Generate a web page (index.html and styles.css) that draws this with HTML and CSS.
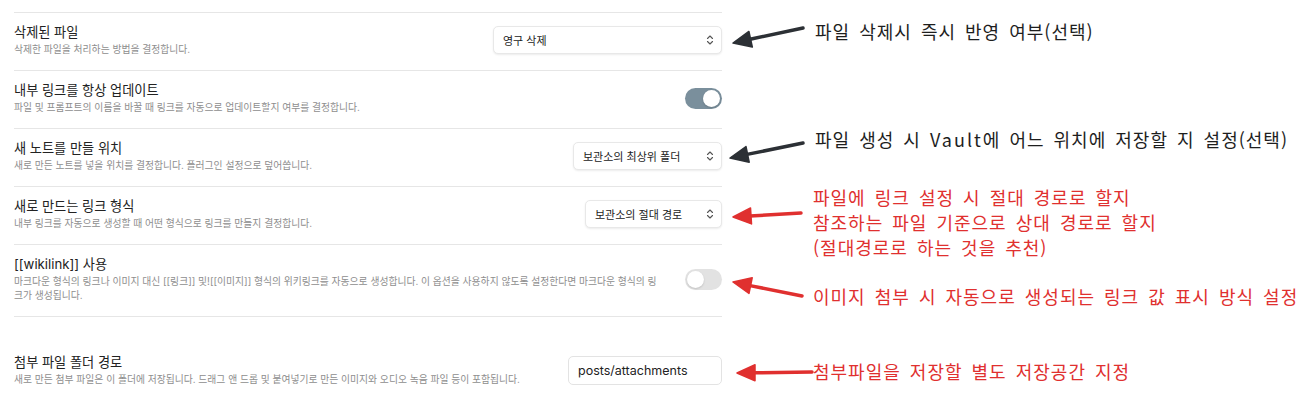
FILE: index.html
```html
<!DOCTYPE html>
<html lang="ko">
<head>
<meta charset="utf-8">
<title>Settings</title>
<link rel="stylesheet" href="styles.css">
</head>
<body>
<div class="page">
  <div class="panel">
    <div class="group">
      <div class="item">
        <div class="info">
          <div class="name">삭제된 파일</div>
          <div class="desc">삭제한 파일을 처리하는 방법을 결정합니다.</div>
        </div>
        <div class="control">
          <div class="dropdown dd-wide"><span>영구 삭제</span>
            <svg class="chev" viewBox="0 0 8 12" width="8" height="12"><path d="M1.5 4.5 L4 2 L6.5 4.5 M1.5 7.5 L4 10 L6.5 7.5"/></svg>
          </div>
        </div>
      </div>
      <div class="item">
        <div class="info">
          <div class="name">내부 링크를 항상 업데이트</div>
          <div class="desc">파일 및 프롬프트의 이름을 바꿀 때 링크를 자동으로 업데이트할지 여부를 결정합니다.</div>
        </div>
        <div class="control">
          <div class="toggle on"><span class="knob"></span></div>
        </div>
      </div>
      <div class="item">
        <div class="info">
          <div class="name">새 노트를 만들 위치</div>
          <div class="desc">새로 만든 노트를 넣을 위치를 결정합니다. 플러그인 설정으로 덮어씁니다.</div>
        </div>
        <div class="control">
          <div class="dropdown dd-mid"><span>보관소의 최상위 폴더</span>
            <svg class="chev" viewBox="0 0 8 12" width="8" height="12"><path d="M1.5 4.5 L4 2 L6.5 4.5 M1.5 7.5 L4 10 L6.5 7.5"/></svg>
          </div>
        </div>
      </div>
      <div class="item">
        <div class="info">
          <div class="name">새로 만드는 링크 형식</div>
          <div class="desc">내부 링크를 자동으로 생성할 때 어떤 형식으로 링크를 만들지 결정합니다.</div>
        </div>
        <div class="control">
          <div class="dropdown dd-narrow"><span>보관소의 절대 경로</span>
            <svg class="chev" viewBox="0 0 8 12" width="8" height="12"><path d="M1.5 4.5 L4 2 L6.5 4.5 M1.5 7.5 L4 10 L6.5 7.5"/></svg>
          </div>
        </div>
      </div>
      <div class="item">
        <div class="info">
          <div class="name">[[wikilink]] 사용</div>
          <div class="desc nowrap">마크다운 형식의 링크나 이미지 대신 [[링크]] 및![[이미지]] 형식의 위키링크를 자동으로 생성합니다. 이 옵션을 사용하지 않도록 설정한다면 마크다운 형식의 링<br>크가 생성됩니다.</div>
        </div>
        <div class="control">
          <div class="toggle"><span class="knob"></span></div>
        </div>
      </div>
    </div>
    <div class="group second">
      <div class="item first">
        <div class="info">
          <div class="name">첨부 파일 폴더 경로</div>
          <div class="desc">새로 만든 첨부 파일은 이 폴더에 저장됩니다. 드래그 앤 드롭 및 붙여넣기로 만든 이미지와 오디오 녹음 파일 등이 포함됩니다.</div>
        </div>
        <div class="control">
          <div class="textbox">posts/attachments</div>
        </div>
      </div>
    </div>
  </div>

  <svg class="arrows" width="1316" height="407" viewBox="0 0 1316 407">
    <g class="dark">
      <line x1="803" y1="28" x2="750" y2="39.2"/>
      <polygon points="733,43 752.3,47 748.9,31.4"/>
      <line x1="803" y1="143" x2="747" y2="154.4"/>
      <polygon points="730,158 749.2,162.2 746,146.6"/>
    </g>
    <g class="red">
      <line x1="801" y1="213" x2="750" y2="216"/>
      <polygon points="733,217 751.5,223.9 750.5,207.9"/>
      <line x1="802" y1="296" x2="750" y2="285.6"/>
      <polygon points="733,282 749,293.4 752.2,277.8"/>
      <line x1="812" y1="372" x2="754" y2="372.8"/>
      <polygon points="737,373 755,380.8 755,364.8"/>
    </g>
  </svg>

  <div class="note note-dark n1">파일 삭제시 즉시 반영 여부(선택)</div>
  <div class="note note-dark n2">파일 생성 시 <span class="latin">Vault</span>에 어느 위치에 저장할 지 설정(선택)</div>
  <div class="note note-red n3">파일에 링크 설정 시 절대 경로로 할지<br>참조하는 파일 기준으로 상대 경로로 할지<br>(절대경로로 하는 것을 추천)</div>
  <div class="note note-red n4">이미지 첨부 시 자동으로 생성되는 링크 값 표시 방식 설정</div>
  <div class="note note-red n5">첨부파일을 저장할 별도 저장공간 지정</div>
</div>
</body>
</html>
```

FILE: styles.css
```css
* { box-sizing: border-box; }

html, body {
  margin: 0;
  padding: 0;
  background: #ffffff;
}

body {
  width: 1316px;
  height: 407px;
  overflow: hidden;
  font-family: Inter, "Noto Sans CJK KR", sans-serif;
  color: #222222;
}

.page {
  position: relative;
  width: 1316px;
  height: 407px;
  padding: 12px 0 0 14px;
}

.panel {
  width: 708px;
}

.group {
  border-bottom: 1px solid #e6e6e6;
}

.group.second {
  border-bottom: none;
  margin-top: 26px;
}

.item {
  display: flex;
  align-items: center;
  border-top: 1px solid #e6e6e6;
  padding: 10px 0 13px 0;
}

.item.first {
  border-top: none;
}

.info {
  flex: 1;
  min-width: 0;
}

.name {
  font-size: 13.2px;
  line-height: 18px;
  color: #222222;
}

.desc {
  margin-top: 2px;
  font-size: 9.8px;
  line-height: 14px;
  color: #8e8e8e;
}

.desc.nowrap {
  white-space: nowrap;
}

.control {
  display: flex;
  align-items: center;
  justify-content: flex-end;
  margin-left: 16px;
}

.dropdown {
  display: flex;
  align-items: center;
  justify-content: space-between;
  height: 28px;
  padding: 0 7px 0 9px;
  border: 1px solid #e8e8e8;
  border-radius: 5px;
  background: #ffffff;
  box-shadow: 0 1px 2px rgba(0, 0, 0, 0.08);
  font-size: 11px;
  color: #222222;
}

.dd-wide { width: 229px; }
.dd-mid { width: 149px; }
.dd-narrow { width: 137px; }

.chev {
  fill: none;
  stroke: #555555;
  stroke-width: 1.1;
  stroke-linecap: round;
  stroke-linejoin: round;
}

.toggle {
  position: relative;
  width: 37px;
  height: 21px;
  border-radius: 11px;
  background: #e2e2e2;
}

.toggle.on {
  background: #7a8f9c;
}

.knob {
  position: absolute;
  top: 2px;
  left: 2px;
  width: 17px;
  height: 17px;
  border-radius: 50%;
  background: #ffffff;
  box-shadow: 0 1px 2px rgba(0, 0, 0, 0.15);
}

.toggle.on .knob {
  left: 18px;
}

.textbox {
  width: 154px;
  height: 29px;
  padding-left: 9px;
  display: flex;
  align-items: center;
  border: 1px solid #e3e3e3;
  border-radius: 5px;
  background: #ffffff;
  font-size: 12.5px;
  color: #222222;
}

.arrows {
  position: absolute;
  left: 0;
  top: 0;
  pointer-events: none;
}

.arrows line {
  stroke-width: 3.5;
  stroke-linecap: round;
}

.arrows .dark line { stroke: #2c3035; }
.arrows .dark polygon { fill: #2c3035; stroke: #2c3035; stroke-width: 1.5; stroke-linejoin: round; }
.arrows .red line { stroke: #e0302f; }
.arrows .red polygon { fill: #e0302f; stroke: #e0302f; stroke-width: 1.5; stroke-linejoin: round; }

.note {
  position: absolute;
  font-family: "Noto Sans CJK KR", sans-serif;
  font-size: 18px;
  line-height: 25px;
  letter-spacing: 1px;
  word-spacing: 3px;
  white-space: nowrap;
}

.note .latin {
  letter-spacing: 2px;
}

.note-dark { color: #1e1e1e; }
.note-red { color: #e0302f; }

.n1 { left: 815px; top: 19px; }
.n2 { left: 815px; top: 127px; }
.n3 { left: 813px; top: 185px; }
.n4 { left: 813px; top: 284px; }
.n5 { left: 813px; top: 359px; }
```
